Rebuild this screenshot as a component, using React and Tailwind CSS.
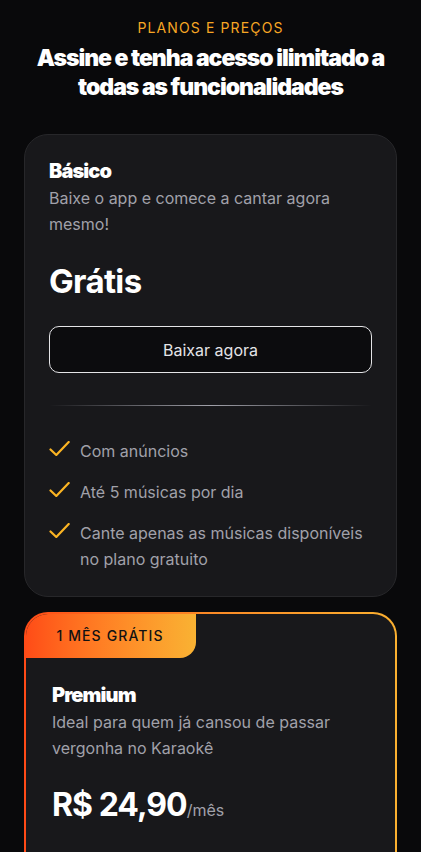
const basicFeatures = [
  'Com anúncios',
  'Até 5 músicas por dia',
  'Cante apenas as músicas disponíveis no plano gratuito',
];

const premiumFeatures = [
  'Sem anúncios',
  'Músicas ilimitadas',
  'Acesso a todo o catálogo',
];

function CheckIcon() {
  return (
    <svg width="21" height="15" viewBox="0 0 21 15" fill="none" className="mt-[3px] shrink-0">
      <path d="M1.5 8.5 7.3 14 19.7 1" stroke="#fbb423" strokeWidth="2.2" strokeLinecap="round" strokeLinejoin="round" />
    </svg>
  );
}

function FeatureList({ items }) {
  return (
    <ul className="flex flex-col gap-[15px]">
      {items.map((f) => (
        <li key={f} className="flex items-start gap-[10px] text-[16px] leading-[26px] text-[#a1a1aa]">
          <CheckIcon />
          <span>{f}</span>
        </li>
      ))}
    </ul>
  );
}

export default function App() {
  return (
    <div className="min-h-screen bg-[#09090b] px-6 pt-[18px] pb-10 font-['Inter',sans-serif] text-white">
      {/* Header */}
      <p className="text-center text-[14px] leading-5 tracking-[0.08em] text-[#f7a624]">PLANOS E PREÇOS</p>
      <h1 className="mx-auto mt-[6px] text-center text-[23px] font-black leading-[29px] tracking-[-0.045em]">
        Assine e tenha acesso ilimitado a todas as funcionalidades
      </h1>

      {/* Básico */}
      <div className="mt-8 rounded-3xl border border-[#27272a] bg-[#18181b] px-6 pt-[22px] pb-[24px]">
        <h2 className="text-[20px] font-black leading-7 tracking-[-0.045em]">Básico</h2>
        <p className="text-[16px] leading-[26px] text-[#a1a1aa]">Baixe o app e comece a cantar agora mesmo!</p>
        <p className="mt-[24px] text-[33px] font-bold leading-10 tracking-[-0.02em]">Grátis</p>
        <button className="mt-[25px] flex h-[47px] w-full items-center justify-center rounded-[10px] border border-[#e4e4e7] bg-[#0c0c0e] text-[16px] text-[#e4e4e7]">
          Baixar agora
        </button>
        <div className="mt-8 h-px w-full bg-gradient-to-r from-transparent via-[#a1a1aa] to-transparent" />
        <div className="mt-[32px]">
          <FeatureList items={basicFeatures} />
        </div>
      </div>

      {/* Premium */}
      <div className="mt-[15px] rounded-3xl bg-gradient-to-r from-[#ff4a17] via-[#fb8a26] to-[#fbb030] p-[2px]">
        <div className="overflow-hidden rounded-[22px] bg-[#18181b]">
          <div className="-ml-[2px] -mt-[2px] flex h-[46px] w-[172px] items-center justify-center rounded-br-2xl bg-gradient-to-r from-[#ff4a17] to-[#f9b233] text-[14px] font-medium tracking-[0.08em] text-[#111113]">
            1 MÊS GRÁTIS
          </div>
          <div className="px-[26px] pt-[23px] pb-[26px]">
            <h2 className="text-[20px] font-black leading-7 tracking-[-0.045em]">Premium</h2>
            <p className="text-[16px] leading-[26px] text-[#a1a1aa]">Ideal para quem já cansou de passar vergonha no Karaokê</p>
            <p className="mt-[24px] flex items-baseline text-[32px] font-bold leading-10 tracking-[-0.03em]">
              R$ 24,90<span className="text-[16px] font-normal tracking-normal text-[#a1a1aa]">/mês</span>
            </p>
            <button className="mt-[25px] flex h-[47px] w-full items-center justify-center rounded-[10px] bg-white text-[16px] font-medium text-[#09090b]">
              Assinar agora
            </button>
            <div className="mt-8 h-px w-full bg-gradient-to-r from-transparent via-[#a1a1aa] to-transparent" />
            <div className="mt-[32px]">
              <FeatureList items={premiumFeatures} />
            </div>
          </div>
        </div>
      </div>
    </div>
  );
}
